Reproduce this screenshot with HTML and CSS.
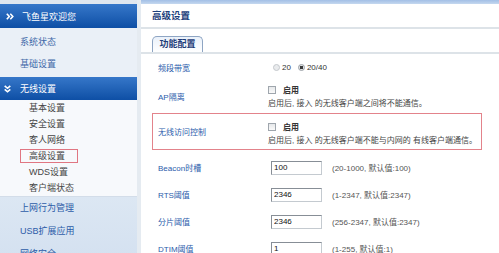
FILE: index.html
```html
<!DOCTYPE html>
<html lang="zh-CN">
<head>
<meta charset="utf-8">
<title>高级设置</title>
<link rel="stylesheet" href="styles.css">
</head>
<body>
<div class="page">
  <aside class="side">
    <div class="side-top"></div>
    <div class="side-head head-welcome">
      <svg class="ico" width="8" height="7" viewBox="0 0 8 7"><polyline points="0.8,0.8 3.3,3.5 0.8,6.2" fill="none" stroke="#fff" stroke-width="1.6"/><polyline points="4.3,0.8 6.8,3.5 4.3,6.2" fill="none" stroke="#fff" stroke-width="1.6"/></svg>
      <span>飞鱼星欢迎您</span>
    </div>
    <ul class="side-items">
      <li>系统状态</li>
      <li>基础设置</li>
    </ul>
    <div class="side-head head-wifi">
      <svg class="ico" width="7" height="8" viewBox="0 0 7 8"><polyline points="0.7,0.8 3.5,3.3 6.3,0.8" fill="none" stroke="#fff" stroke-width="1.6"/><polyline points="0.7,4.3 3.5,6.8 6.3,4.3" fill="none" stroke="#fff" stroke-width="1.6"/></svg>
      <span>无线设置</span>
    </div>
    <ul class="sub">
      <li>基本设置</li>
      <li>安全设置</li>
      <li>客人网络</li>
      <li class="sub-active"><span>高级设置</span></li>
      <li>WDS设置</li>
      <li>客户端状态</li>
    </ul>
    <ul class="side-bottom">
      <li>上网行为管理</li>
      <li>USB扩展应用</li>
      <li>网络安全</li>
    </ul>
  </aside>
  <div class="divider"></div>
  <main class="main">
    <div class="main-top"></div>
    <h1 class="title">高级设置</h1>
    <div class="tabs"><span class="tab">功能配置</span></div>
    <div class="form">
      <div class="row row-band">
        <div class="label">频段带宽</div>
        <div class="value radios">
          <label class="radio-item"><input type="radio" name="bw" class="radio">20</label>
          <label class="radio-item"><input type="radio" name="bw" class="radio" checked>20/40</label>
        </div>
      </div>
      <div class="row row-check">
        <div class="label">AP隔离</div>
        <div class="value">
          <div class="check-line"><input type="checkbox" class="check"><b>启用</b></div>
          <div class="desc">启用后, 接入 的无线客户端之间将不能通信。</div>
        </div>
      </div>
      <div class="row row-check row-alert">
        <div class="label">无线访问控制</div>
        <div class="value">
          <div class="check-line"><input type="checkbox" class="check"><b>启用</b></div>
          <div class="desc">启用后, 接入 的无线客户端不能与内网的 有线客户端通信。</div>
        </div>
      </div>
      <div class="row row-num">
        <div class="label">Beacon时槽</div>
        <div class="value"><input class="num" type="text" value="100"><span class="hint">(20-1000, 默认值:100)</span></div>
      </div>
      <div class="row row-num">
        <div class="label">RTS阈值</div>
        <div class="value"><input class="num" type="text" value="2346"><span class="hint">(1-2347, 默认值:2347)</span></div>
      </div>
      <div class="row row-num">
        <div class="label">分片阈值</div>
        <div class="value"><input class="num" type="text" value="2346"><span class="hint">(256-2347, 默认值:2347)</span></div>
      </div>
      <div class="row row-num">
        <div class="label">DTIM阈值</div>
        <div class="value"><input class="num" type="text" value="1"><span class="hint">(1-255, 默认值:1)</span></div>
      </div>
    </div>
  </main>
</div>
</body>
</html>
```

FILE: styles.css
```css
html, body {
  margin: 0;
  padding: 0;
  background: #fff;
}
body {
  font-family: "Liberation Sans", "Noto Sans CJK SC", sans-serif;
  overflow: hidden;
}
.page {
  display: flex;
  height: 253px;
  overflow: hidden;
}

/* sidebar */
.side {
  width: 137px;
  flex: none;
  background: #f6f8fb;
}
.side-top {
  height: 4px;
  background: #dfe6ef;
}
.side-head {
  display: flex;
  align-items: center;
  background: linear-gradient(#3677c9, #0e4fa5);
  color: #fff;
  font-size: 9px;
  box-sizing: border-box;
}
.head-welcome {
  height: 24px;
  padding-left: 6px;
  gap: 8px;
}
.head-wifi {
  height: 23px;
  padding-left: 4px;
  gap: 9px;
}
.ico {
  flex: none;
  display: block;
}
.side-items,
.sub,
.side-bottom {
  list-style: none;
  margin: 0;
  padding: 0;
}
.side-items {
  padding: 3px 0 2px;
  background: #eaf0f7;
}
.side-items li {
  height: 22px;
  line-height: 22px;
  padding-left: 20px;
  font-size: 9px;
  color: #4168a8;
}
.sub {
  background: #f7f9fc;
  border-bottom: 1px solid #d3dde9;
}
.sub li {
  height: 16px;
  line-height: 16px;
  padding-left: 29px;
  font-size: 9px;
  color: #454545;
}
.sub li.sub-active {
  padding-left: 20px;
  display: flex;
  align-items: center;
}
.sub-active span {
  display: block;
  width: 58px;
  height: 14px;
  line-height: 12px;
  box-sizing: border-box;
  border: 1px solid #e07682;
  padding-left: 8px;
}
.side-bottom {
  background: linear-gradient(#dce7f3, #d3e0f0);
}
.side-bottom li {
  height: 23px;
  line-height: 23px;
  padding-left: 20px;
  font-size: 9px;
  color: #2d5ca8;
}

.divider {
  width: 4px;
  flex: none;
  background: #e5ebf1;
}

/* main */
.main {
  flex: 1;
  min-width: 0;
}
.main-top {
  height: 4px;
  background: linear-gradient(#a2bfe6, #c5d8ef);
}
.title {
  margin: 0;
  height: 23px;
  line-height: 23px;
  padding-left: 11px;
  font-size: 9.5px;
  font-weight: bold;
  color: #1d3f7c;
  border-bottom: 2px solid #dde3e8;
}
.tabs {
  display: flex;
  padding: 7px 0 0 11px;
  border-bottom: 2px solid #dde3e8;
}
.tab {
  display: block;
  width: 51px;
  height: 16px;
  box-sizing: border-box;
  border: 1px solid #8ea5c3;
  border-bottom: none;
  border-radius: 5px 5px 0 0;
  background: linear-gradient(#eaf1fa, #fff);
  text-align: center;
  line-height: 15px;
  font-size: 9px;
  font-weight: bold;
  color: #1d3c78;
}

.form {
  margin: 0 17px 0 11px;
}
.row {
  display: flex;
  align-items: center;
  box-sizing: border-box;
}
.label {
  flex: none;
  width: 110px;
  padding-left: 6px;
  font-size: 8px;
  color: #2b5cab;
}
.value {
  font-size: 8px;
  color: #333;
}
.row-band {
  height: 26px;
}
.radios {
  display: flex;
  align-items: center;
  padding-left: 5px;
  gap: 7px;
}
.radio-item {
  display: flex;
  align-items: center;
  gap: 2px;
  color: #333;
}
.radio {
  appearance: none;
  -webkit-appearance: none;
  margin: 0;
  width: 7px;
  height: 7px;
  border-radius: 50%;
  box-sizing: border-box;
  border: 1px solid #c4c8cc;
  background: #e9ebed;
}
.radio:checked {
  border-color: #9aa0a6;
  background: radial-gradient(circle, #3a3a3a 0 1.6px, #e2e4e6 2px);
}
.row-check {
  height: 33px;
}
.row-alert {
  height: 37px;
  border: 1px solid #e3838b;
  margin-bottom: 4px;
}
.row-alert .label {
  padding-left: 5px;
}
.row-alert .value {
  padding-top: 4px;
}
.check-line {
  display: flex;
  align-items: center;
  height: 14px;
}
.check {
  appearance: none;
  -webkit-appearance: none;
  margin: 0 7px 0 0;
  width: 8px;
  height: 8px;
  box-sizing: border-box;
  border: 1px solid #9fa6ad;
  background: linear-gradient(#e6e8ea, #fafafa);
}
.check-line b {
  font-weight: bold;
  color: #333;
}
.desc {
  height: 14px;
  line-height: 14px;
  white-space: nowrap;
  color: #444;
}
.row-num {
  height: 27px;
}
.row-num .value {
  display: flex;
  align-items: center;
}
.num {
  width: 51px;
  height: 14px;
  box-sizing: border-box;
  margin: 0 10px 0 3px;
  padding: 0 2px;
  border: 1px solid;
  border-color: #878e96 #c4cad0 #c4cad0 #878e96;
  font-family: "Liberation Sans", sans-serif;
  font-size: 8px;
  color: #111;
  background: #fff;
  outline: none;
}
.hint {
  color: #555;
  white-space: nowrap;
}
```
